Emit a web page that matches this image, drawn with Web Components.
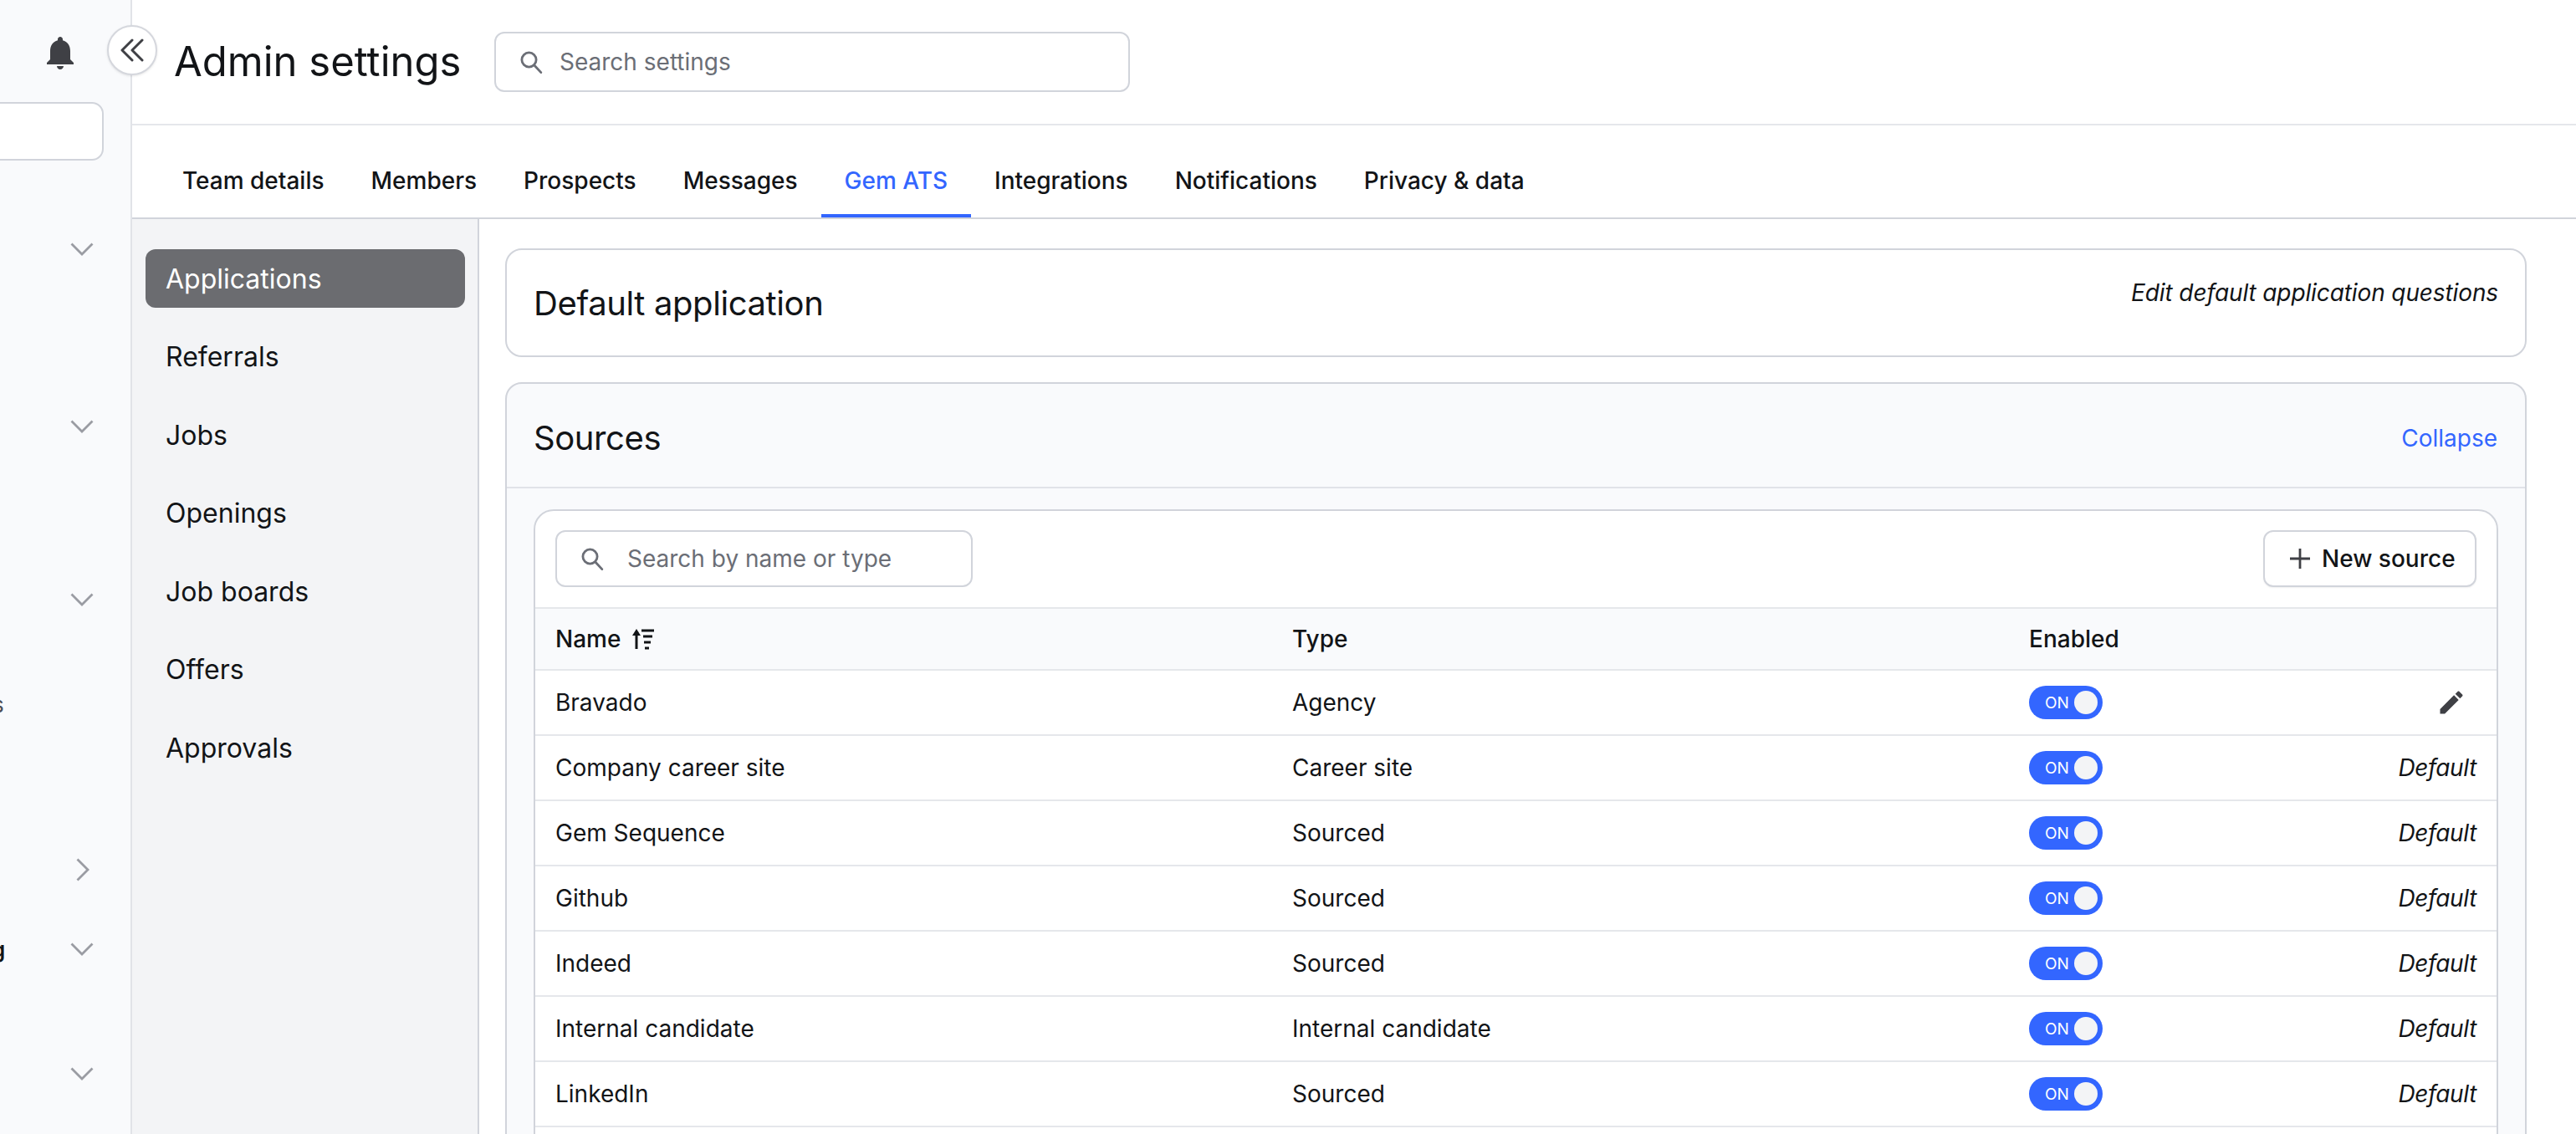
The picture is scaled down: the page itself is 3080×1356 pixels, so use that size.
<!DOCTYPE html>
<html lang="en">
<head>
	<meta charset="utf-8">
	<title>Admin settings</title>
	<style>
		html, body { margin: 0; height: 1356px; overflow: hidden; background: #fff; }
		body { font-family: Inter, "Liberation Sans", sans-serif; color: #121417; font-size: 28px; }
		em { letter-spacing: -.35px; }
	</style>
</head>
<body>

	<app-shell>
		<gem-rail slot="rail"></gem-rail>
		<settings-header></settings-header>
		<settings-tabs>
			<tab-link>Team details</tab-link>
			<tab-link>Members</tab-link>
			<tab-link>Prospects</tab-link>
			<tab-link>Messages</tab-link>
			<tab-link active>Gem ATS</tab-link>
			<tab-link>Integrations</tab-link>
			<tab-link>Notifications</tab-link>
			<tab-link>Privacy &amp; data</tab-link>
		</settings-tabs>
		<settings-body>
			<sub-nav slot="nav">
				<nav-item active>Applications</nav-item>
				<nav-item>Referrals</nav-item>
				<nav-item>Jobs</nav-item>
				<nav-item>Openings</nav-item>
				<nav-item>Job boards</nav-item>
				<nav-item>Offers</nav-item>
				<nav-item>Approvals</nav-item>
			</sub-nav>
			<default-card></default-card>
			<sources-card>
				<source-row>Bravado<span slot="type">Agency</span><pencil-icon slot="action"></pencil-icon></source-row>
				<source-row>Company career site<span slot="type">Career site</span><em slot="action">Default</em></source-row>
				<source-row>Gem Sequence<span slot="type">Sourced</span><em slot="action">Default</em></source-row>
				<source-row>Github<span slot="type">Sourced</span><em slot="action">Default</em></source-row>
				<source-row>Indeed<span slot="type">Sourced</span><em slot="action">Default</em></source-row>
				<source-row>Internal candidate<span slot="type">Internal candidate</span><em slot="action">Default</em></source-row>
				<source-row>LinkedIn<span slot="type">Sourced</span><em slot="action">Default</em></source-row>
			</sources-card>
		</settings-body>
	</app-shell>

<script>

// small helper so each element does not repeat the attachShadow lines
function shadow(el, html) {
	el.attachShadow({mode: 'open'}).innerHTML = html;
}

const searchIcon = `<svg width="28" height="28" viewBox="0 0 28 28" fill="none" stroke="#6b6e76" stroke-width="2.8"><circle cx="11.5" cy="11.5" r="8.6"/><path d="M17.8 18l8 8.6" stroke-linecap="round"/></svg>`;

customElements.define('app-shell', class extends HTMLElement {
	connectedCallback() {
		shadow(this, `
		<style>
		:host { display: flex; width: 3080px; height: 1356px; overflow: hidden; position: relative; }
		main { flex: 1; min-width: 0; display: flex; flex-direction: column; }
		.collapse { position: absolute; left: 128px; top: 30px; width: 60px; height: 60px; box-sizing: border-box; border-radius: 50%; background: #fff; border: 2px solid #d5d7dd; box-shadow: 0 1px 3px rgba(0,0,0,.1); display: flex; align-items: center; justify-content: center; }
		</style>
		<slot name="rail"></slot>
		<main><slot></slot></main>
		<div class="collapse">
			<svg width="30" height="28" viewBox="0 0 30 28" fill="none" stroke="#3f4045" stroke-width="3" stroke-linecap="round" stroke-linejoin="round"><path d="M15 2L3 14l12 12M27 2L15 14l12 12"/></svg>
		</div>`);
	}
});

customElements.define('rail-row', class extends HTMLElement {
	connectedCallback() {
		const right = this.hasAttribute('right');
		const icon = right
			? `<svg width="16" height="28" viewBox="0 0 16 28" fill="none" stroke="#9a9ca3" stroke-width="2.8"><path d="M1.5 1.5L14 14 1.5 26.5"/></svg>`
			: `<svg width="28" height="16" viewBox="0 0 28 16" fill="none" stroke="#9a9ca3" stroke-width="2.8"><path d="M1.5 1.5L14 14 26.5 1.5"/></svg>`;
		const hasIcon = !this.hasAttribute('bare');
		shadow(this, `
		<style>
		:host { display: flex; height: 40px; align-items: center; position: relative; }
		.label { position: absolute; left: 0; top: 0; line-height: 40px; }
		.ico { position: absolute; left: ${right ? 91 : 84}px; top: ${right ? 6 : 12}px; display: flex; }
		</style>
		<span class="label"><slot></slot></span>
		${hasIcon ? `<span class="ico">${icon}</span>` : ''}`);
	}
});

customElements.define('gem-rail', class extends HTMLElement {
	connectedCallback() {
		shadow(this, `
		<style>
		:host { display: block; flex: none; width: 158px; height: 1356px; box-sizing: border-box; background: #f9fafc; border-right: 2px solid #e1e3e8; padding-top: 39px; overflow: hidden; }
		.bell { display: block; margin-left: 48px; }
		.box { margin: 35px 0 0 -40px; width: 164px; height: 70px; box-sizing: border-box; background: #fff; border: 2px solid #d1d4db; border-radius: 14px; }
		.s { font-size: 26px; color: #4b4e55; margin-left: -9px; display: inline-block; }
		.g { font-size: 26px; font-weight: 600; margin-left: -10px; display: inline-block; }
		</style>
		<svg class="bell" width="48" height="48" viewBox="0 0 24 24" fill="#3f4045"><path d="M12 22c1.1 0 2-.9 2-2h-4c0 1.1.89 2 2 2zm6-6v-5c0-3.07-1.64-5.64-4.5-6.32V4c0-.83-.67-1.5-1.5-1.5s-1.5.67-1.5 1.5v.68C7.63 5.36 6 7.92 6 11v5l-2 2v1h16v-1l-2-2z"/></svg>
		<div class="box"></div>
		<rail-row style="margin-top:86px"></rail-row>
		<rail-row style="margin-top:172px"></rail-row>
		<rail-row style="margin-top:167px"></rail-row>
		<rail-row bare style="margin-top:85px"><span class="s">s</span></rail-row>
		<rail-row right style="margin-top:158px"></rail-row>
		<rail-row style="margin-top:55px"><span class="g">g</span></rail-row>
		<rail-row style="margin-top:109px"></rail-row>`);
	}
});

customElements.define('search-box', class extends HTMLElement {
	connectedCallback() {
		shadow(this, `
		<style>
		:host { display: flex; align-items: center; box-sizing: border-box; background: #fff; border: 2px solid #d1d4db; border-radius: 12px; color: #6b6e76; font-size: 28px; }
		svg { flex: none; }
		</style>
		${searchIcon}<slot></slot>`);
	}
});

customElements.define('settings-header', class extends HTMLElement {
	connectedCallback() {
		shadow(this, `
		<style>
		:host { display: flex; align-items: center; flex: none; height: 150px; box-sizing: border-box; border-bottom: 2px solid #e5e7eb; padding-left: 50px; }
		h1 { margin: 0; font-size: 49px; font-weight: 400; line-height: 60px; width: 383px; }
		search-box { width: 760px; height: 72px; padding-left: 28px; gap: 20px; }
		</style>
		<h1>Admin settings</h1>
		<search-box>Search settings</search-box>`);
	}
});

customElements.define('settings-tabs', class extends HTMLElement {
	connectedCallback() {
		shadow(this, `
		<style>
		:host { display: flex; align-items: flex-end; flex: none; height: 112px; box-sizing: border-box; border-bottom: 2px solid #d1d4db; padding-left: 32px; }
		</style>
		<slot></slot>`);
	}
});

customElements.define('tab-link', class extends HTMLElement {
	connectedCallback() {
		shadow(this, `
		<style>
		:host { display: flex; align-items: center; height: 84px; box-sizing: border-box; padding: 0 28px; border-bottom: 4px solid transparent; font-size: 28px; font-weight: 450; }
		:host([active]) { color: #3366ff; border-bottom-color: #3366ff; }
		</style>
		<slot></slot>`);
	}
});

customElements.define('settings-body', class extends HTMLElement {
	connectedCallback() {
		shadow(this, `
		<style>
		:host { display: flex; flex: 1; min-height: 0; }
		.scroll { flex: 1; min-width: 0; padding: 35px 59px 0 31px; display: flex; flex-direction: column; gap: 30px; }
		</style>
		<slot name="nav"></slot>
		<div class="scroll"><slot></slot></div>`);
	}
});

customElements.define('sub-nav', class extends HTMLElement {
	connectedCallback() {
		shadow(this, `
		<style>
		:host { display: flex; flex-direction: column; gap: 23.6px; flex: none; width: 415px; box-sizing: border-box; background: #f3f4f6; border-right: 2px solid #d1d4db; padding: 36px 15px 0 16px; }
		</style>
		<slot></slot>`);
	}
});

customElements.define('nav-item', class extends HTMLElement {
	connectedCallback() {
		shadow(this, `
		<style>
		:host { display: flex; align-items: center; height: 70px; box-sizing: border-box; padding-left: 24px; border-radius: 12px; font-size: 32px; }
		:host([active]) { background: #6b6c70; color: #fff; }
		</style>
		<slot></slot>`);
	}
});

customElements.define('default-card', class extends HTMLElement {
	connectedCallback() {
		shadow(this, `
		<style>
		:host { display: flex; justify-content: space-between; align-items: center; flex: none; height: 130px; box-sizing: border-box; background: #fff; border: 2px solid #d1d4db; border-radius: 20px; padding: 0 32px 0 32px; }
		h2 { margin: 0; font-size: 40px; font-weight: 400; letter-spacing: -.4px; }
		em { align-self: flex-start; margin-top: 34px; line-height: 34px; font-size: 28px; letter-spacing: -.12px; }
		</style>
		<h2>Default application</h2>
		<em>Edit default application questions</em>`);
	}
});

customElements.define('sources-card', class extends HTMLElement {
	connectedCallback() {
		shadow(this, `
		<style>
		:host { display: block; flex: none; box-sizing: border-box; background: #f9fafc; border: 2px solid #d1d4db; border-radius: 20px; padding-bottom: 30px; }
		header { display: flex; justify-content: space-between; align-items: center; height: 125px; box-sizing: border-box; border-bottom: 2px solid #e1e3e8; padding: 6px 33px 0 32px; }
		h2 { margin: 0; font-size: 40px; font-weight: 400; letter-spacing: -.4px; }
		a { color: #3366ff; font-size: 28px; }
		.table { margin: 25px 32px 0; background: #fff; border: 2px solid #d1d4db; border-radius: 24px; overflow: hidden; }
		.bar { display: flex; justify-content: space-between; align-items: center; height: 117px; box-sizing: border-box; padding: 0 24px 1px; border-bottom: 2px solid #e5e7eb; }
		search-box { width: 499px; height: 68px; padding-left: 28px; gap: 28px; font-size: 28px; }
		.new { display: flex; align-items: center; gap: 13px; width: 255px; height: 68px; box-sizing: border-box; padding-left: 29px; background: #fff; border: 2px solid #d1d4db; border-radius: 12px; box-shadow: 0 1px 2px rgba(0,0,0,.06); font-weight: 450; }
		.head { display: grid; grid-template-columns: 881px 881px 1fr; align-items: center; height: 74px; box-sizing: border-box; padding-left: 24px; background: #f9fafc; border-bottom: 2px solid #e5e7eb; font-weight: 450; }
		.name { display: flex; align-items: center; gap: 13px; }
		.filler { height: 80px; }
		</style>
		<header><h2>Sources</h2><a>Collapse</a></header>
		<div class="table">
			<div class="bar">
				<search-box>Search by name or type</search-box>
				<div class="new">
					<svg width="26" height="26" viewBox="0 0 26 26" stroke="#3f4045" stroke-width="2.8"><path d="M13 1v24M1 13h24"/></svg>
					New source
				</div>
			</div>
			<div class="head">
				<div class="name">Name
					<svg width="28" height="26" viewBox="0 0 28 26" fill="none" stroke="#121417" stroke-width="3"><path d="M6 25V4"/><path d="M1 9L6 1l5 8z" fill="#121417" stroke="none"/><path d="M12 3h15M14 10h11M15 17h8M16 24h5"/></svg>
				</div>
				<div>Type</div>
				<div>Enabled</div>
			</div>
			<slot></slot>
			<div class="filler"></div>
		</div>`);
	}
});

customElements.define('source-row', class extends HTMLElement {
	connectedCallback() {
		shadow(this, `
		<style>
		:host { display: grid; grid-template-columns: 881px 881px 200px 1fr; align-items: center; height: 78px; box-sizing: border-box; padding: 0 24px; border-bottom: 2px solid #e5e7eb; font-size: 28px; }
		.action { display: flex; justify-content: flex-end; }
		</style>
		<div><slot></slot></div>
		<div><slot name="type"></slot></div>
		<div><on-toggle></on-toggle></div>
		<div class="action"><slot name="action"></slot></div>`);
	}
});

customElements.define('on-toggle', class extends HTMLElement {
	connectedCallback() {
		shadow(this, `
		<style>
		:host { display: flex; align-items: center; justify-content: space-between; width: 88px; height: 40px; box-sizing: border-box; padding: 0 6px 0 19px; border-radius: 20px; background: #3366ff; color: #fff; font-size: 19px; }
		i { display: block; width: 28px; height: 28px; border-radius: 50%; background: #f3f4f6; }
		</style>
		<span>ON</span><i></i>`);
	}
});

customElements.define('pencil-icon', class extends HTMLElement {
	connectedCallback() {
		shadow(this, `
		<style>
		:host { display: block; margin-right: 12px; height: 36px; }
		</style>
		<svg width="36" height="36" viewBox="0 0 24 24" fill="#3f4045"><path d="M3 17.25V21h3.75L17.81 9.94l-3.75-3.75L3 17.25zM20.71 7.04c.39-.39.39-1.02 0-1.41l-2.34-2.34c-.39-.39-1.02-.39-1.41 0l-1.83 1.83 3.75 3.75 1.83-1.83z"/></svg>`);
	}
});

</script>


</body>
</html>
